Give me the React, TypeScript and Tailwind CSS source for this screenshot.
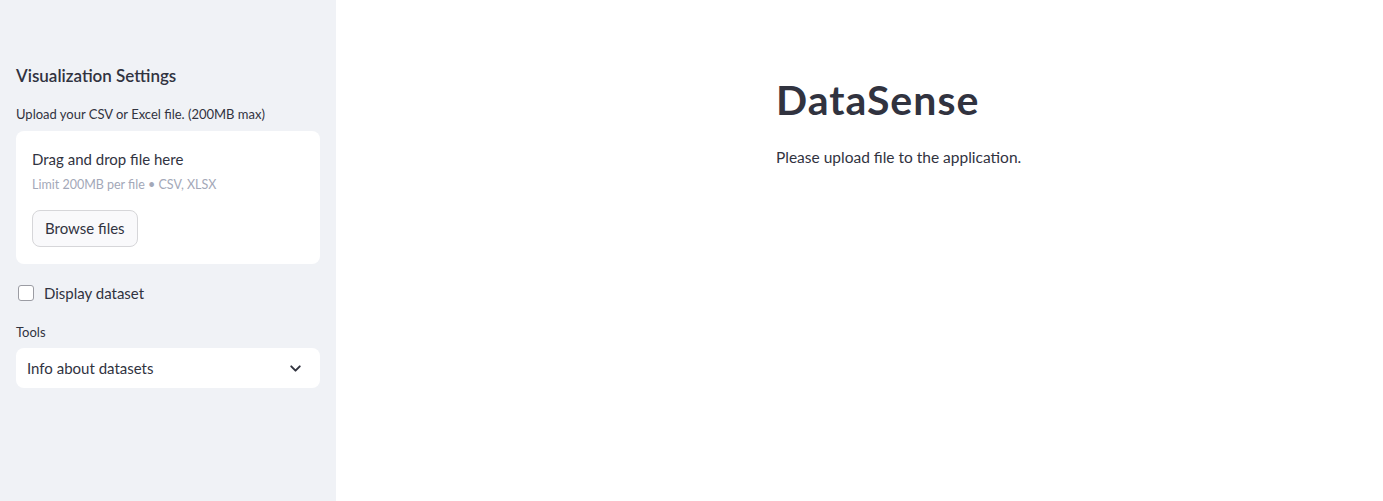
import { ChevronDown } from "lucide-react";

const font = { fontFamily: "Lato, 'Noto Sans', sans-serif" };

const Sidebar = () => {
  return (
    <aside className="w-[336px] shrink-0 bg-[#f0f2f6] min-h-[501px] px-4 pt-[64px]">
      {/* Header */}
      <h3 className="text-[17px] font-semibold text-[#31333f] leading-6">
        Visualization Settings
      </h3>

      {/* File uploader */}
      <p className="mt-[16px] text-[13px] text-[#31333f] leading-5">
        Upload your CSV or Excel file. (200MB max)
      </p>
      <div className="mt-[7px] h-[133px] bg-white rounded-lg px-4 pt-[18px]">
        <p className="text-[15px] text-[#31333f] leading-5">
          Drag and drop file here
        </p>
        <p className="mt-[8px] text-[12.5px] text-[#a3a8b8] leading-4">
          Limit 200MB per file • CSV, XLSX
        </p>
        <button className="mt-[17px] h-[37px] px-3 rounded-lg border border-[#d6d6d9] bg-[#f9f9fb] text-[15px] text-[#31333f]">
          Browse files
        </button>
      </div>

      {/* Checkbox */}
      <label className="mt-[19px] flex items-center gap-[10px] pl-[2px]">
        <span className="w-4 h-4 rounded-[3px] border border-[#9b9ca3] bg-white" />
        <span className="text-[15px] text-[#31333f] leading-5">Display dataset</span>
      </label>

      {/* Select */}
      <p className="mt-[19px] text-[13px] text-[#31333f] leading-5">Tools</p>
      <div className="mt-[6px] h-10 bg-white rounded-lg flex items-center justify-between pl-[11px] pr-4">
        <span className="text-[15px] text-[#31333f]">Info about datasets</span>
        <ChevronDown size={17} strokeWidth={2.75} className="text-[#31333f]" />
      </div>
    </aside>
  );
};

const App = () => {
  return (
    <div className="flex w-full min-h-[501px] bg-white" style={font}>
      <Sidebar />
      <main className="flex-1 pl-[440px] pt-[74px]">
        <h1 className="text-[41px] font-bold text-[#31333f] leading-[52px] tracking-[1px]">
          DataSense
        </h1>
        <p className="mt-[19px] text-[15.5px] text-[#31333f] leading-6">
          Please upload file to the application.
        </p>
      </main>
    </div>
  );
};

export default App;
